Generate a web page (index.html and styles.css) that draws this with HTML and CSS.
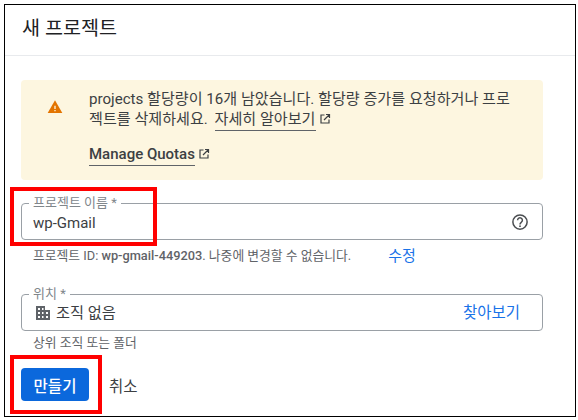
FILE: index.html
```html
<!DOCTYPE html>
<html lang="ko">
<head>
<meta charset="utf-8">
<title>새 프로젝트</title>
<link rel="stylesheet" href="styles.css">
</head>
<body>
<main class="frame">
  <header class="title-bar"><h1 class="title">새 프로젝트</h1></header>
  <div class="content">
    <section class="notice">
      <svg class="warn" viewBox="0 0 24 24" width="16" height="16"><path fill="#e37400" d="M1 21h22L12 2z"/><path fill="#fdf6e0" d="M11 10h2v5h-2zM11 16.500h2v2h-2z"/></svg>
      <div class="notice-body">
        <p class="notice-text">projects 할당량이 16개 남았습니다. 할당량 증가를 요청하거나 프로<br>젝트를 삭제하세요. <a class="ulink learn">자세히 알아보기</a><svg class="ext" viewBox="0 0 24 24" width="12" height="12"><path fill="none" stroke="#3c4043" stroke-width="2.400" d="M11 4H4v16h16v-7M14 3h7v7M21 3 10 14"/></svg></p>
        <p class="notice-link"><a class="ulink">Manage Quotas</a><svg class="ext" viewBox="0 0 24 24" width="12" height="12"><path fill="none" stroke="#3c4043" stroke-width="2.400" d="M11 4H4v16h16v-7M14 3h7v7M21 3 10 14"/></svg></p>
      </div>
    </section>

    <div class="field name-field">
      <span class="legend">프로젝트 이름 *</span>
      <span class="value">wp-Gmail</span>
      <svg viewBox="0 0 24 24" width="18" height="18"><circle cx="12" cy="12" r="9.500" fill="none" stroke="#4a4d50" stroke-width="2"/><path fill="none" stroke="#4a4d50" stroke-width="2" d="M8.800 9.700a3.200 3.200 0 1 1 5 2.600c-1.200.9-1.800 1.300-1.800 2.900"/><circle cx="12" cy="17.500" r="1.200" fill="#4a4d50"/></svg>
    </div>
    <div class="hint-row">
      <p class="hint">프로젝트 ID: <b class="strong">wp-gmail-449203</b>. 나중에 변경할 수 없습니다.</p>
      <a class="edit">수정</a>
    </div>

    <div class="field loc-field">
      <span class="legend">위치 *</span>
      <svg class="building" viewBox="0 0 16 16" width="16" height="16"><path fill="#5f6368" fill-rule="evenodd" d="M1 1h9v4h5v10H1zM3 3v2h2V3zm4 0v2h1.500V3zM3 7v2h2V7zm4 0v2h1.500V7zm4 0v2h2V7zM3 11v2h2v-2zm4 0v2h1.500v-2zm4 0v2h2v-2z"/></svg>
      <span class="value org">조직 없음</span>
      <a class="browse">찾아보기</a>
    </div>
    <p class="hint loc-hint">상위 조직 또는 폴더</p>

    <div class="actions">
      <button class="primary">만들기</button>
      <button class="cancel">취소</button>
    </div>
  </div>
  <div class="mark mark-name"></div>
  <div class="mark mark-create"></div>
</main>
</body>
</html>
```
FILE: styles.css
```css
* { box-sizing: border-box; }
html, body { margin: 0; padding: 0; background: #fff; }
body { width: 578px; height: 420px; overflow: hidden; padding: 4px 2px 0 4px; font-family: Roboto, "Noto Sans CJK KR", sans-serif; color: #3c4043; }
.frame { position: relative; width: 572px; height: 413px; border: 1px solid #000; }
.title-bar { height: 51px; border-bottom: 1px solid #e8eaed; padding: 10px 0 0 17px; }
.title { margin: 0; font-size: 19.600px; line-height: 28px; font-weight: 400; color: #202124; }
.content { padding: 24px 0 0 16px; width: 538px; }
.notice { display: flex; height: 100px; background: #fdf6e0; border-radius: 4px; padding: 9px 0 0 26px; }
.warn { margin: 10px 0 0; flex: none; }
.notice-body { margin-left: 26px; }
.notice-text { margin: 0; font-size: 15.100px; line-height: 20px; color: #3c4043; white-space: nowrap; }
.notice-link { margin: 15px 0 0; font-size: 15px; line-height: 20px; font-weight: 500; white-space: nowrap; }
.ulink { color: #3c4043; border-bottom: 1px solid #5f6368; padding-bottom: 2px; }
.learn { margin-left: 3px; }
.ext { margin-left: 3px; vertical-align: -1px; }
.field { position: relative; display: flex; align-items: center; border: 1px solid #9aa0a6; border-radius: 4px; height: 37px; }
.name-field { margin-top: 23px; padding: 0 13px 0 11px; justify-content: space-between; }
.loc-field { margin-top: 26px; padding: 0 22px 0 13px; }
.legend { position: absolute; top: -8px; left: 7px; padding: 0 4px; background: #fff; font-size: 13px; line-height: 14px; color: #80868b; }
.value { font-size: 15px; line-height: 20px; color: #3c4043; margin-top: 2px; }
.org { margin: 0 0 0 5px; font-size: 15.250px; }
.building { flex: none; }
.browse { margin-left: auto; font-size: 15.500px; line-height: 20px; color: #1a73e8; }
.hint-row { display: flex; align-items: center; height: 24px; margin-top: 4px; padding-left: 12px; }
.hint { margin: 0; font-size: 12.800px; line-height: 16px; color: #5f6368; white-space: nowrap; }
.strong { font-weight: 500; }
.edit { margin-left: 37px; font-size: 15px; line-height: 20px; color: #1a73e8; }
.loc-hint { margin-top: 4px; padding-left: 12px; }
.actions { display: flex; align-items: center; margin-top: 17px; gap: 6px; }
.primary { width: 68px; height: 33px; border: 0; border-radius: 4px; background: #0b68dc; color: #fff; font: 500 15.500px Roboto, "Noto Sans CJK KR", sans-serif; }
.cancel { border: 0; background: none; padding: 0 14px; font: 400 15.500px Roboto, "Noto Sans CJK KR", sans-serif; color: #3c4043; }
.mark { position: absolute; border: 4px solid #f00; }
.mark-name { left: 5px; top: 182px; width: 147px; height: 59px; }
.mark-create { left: 5px; top: 350px; width: 92px; height: 59px; }
```
